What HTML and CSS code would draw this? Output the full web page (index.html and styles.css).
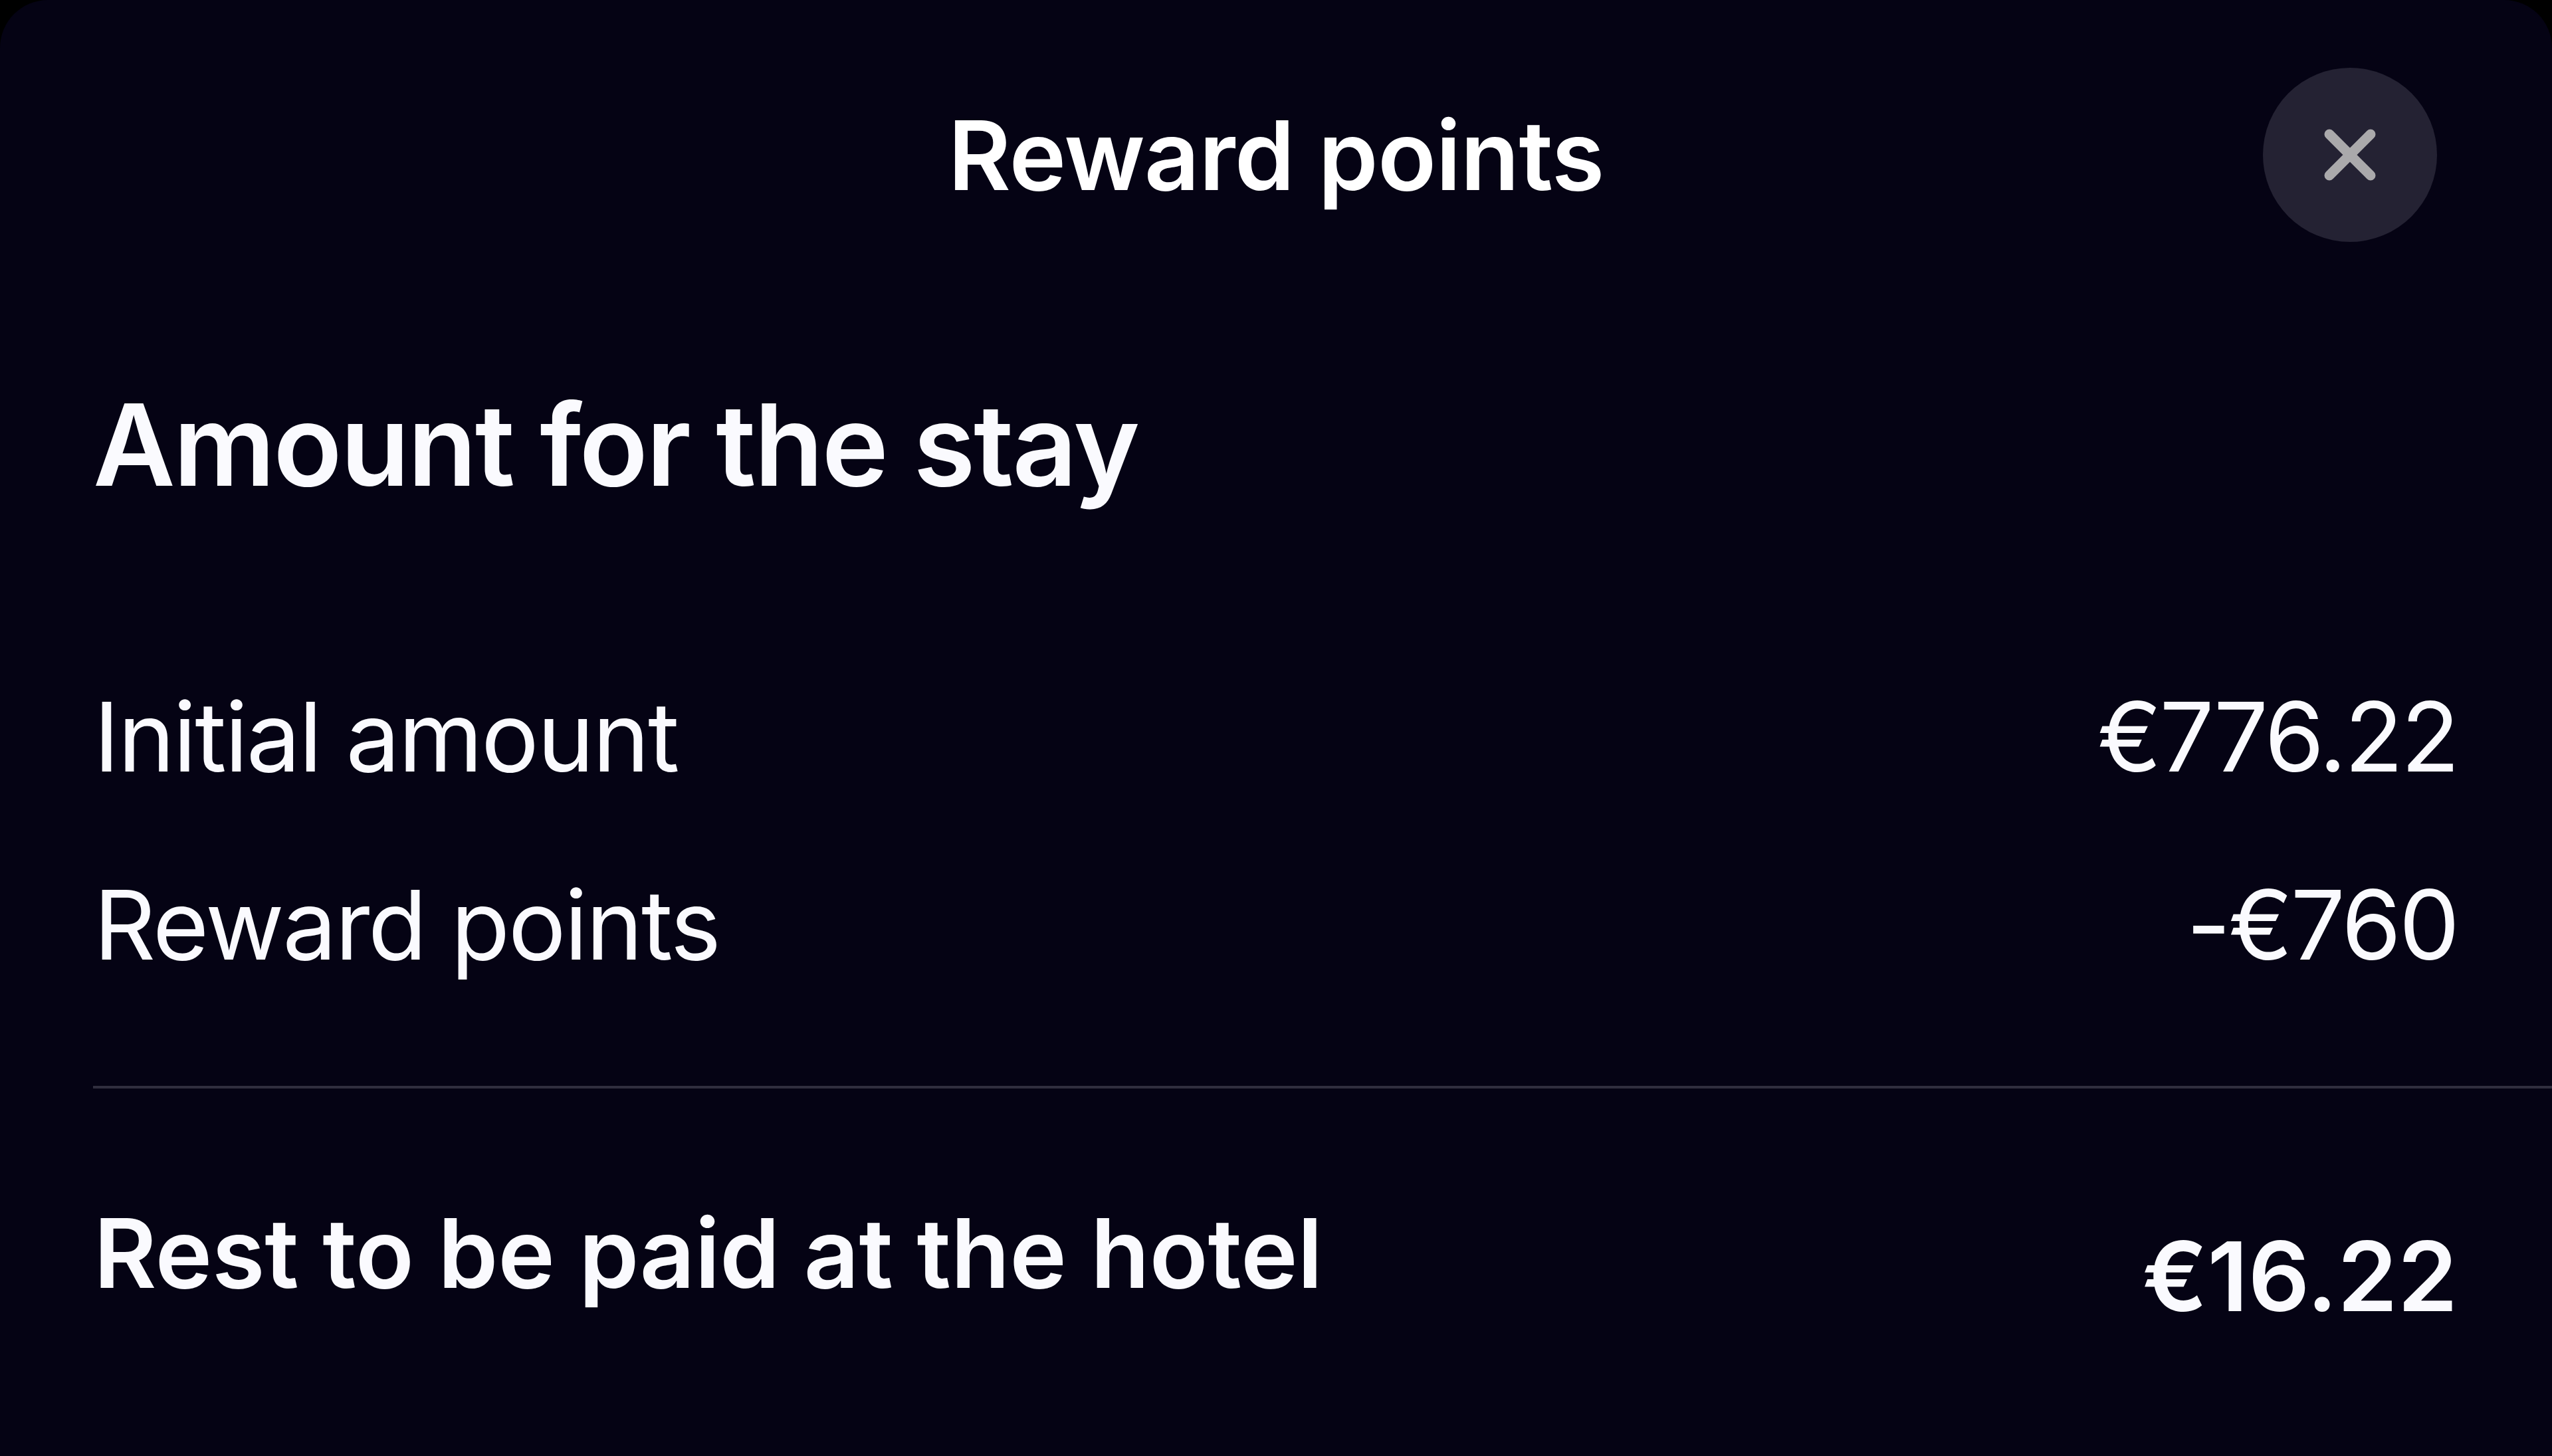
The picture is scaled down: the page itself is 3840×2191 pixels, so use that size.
FILE: index.html
```html
<!DOCTYPE html>
<html lang="en">
<head>
  <meta charset="UTF-8" />
  <title>Reward points</title>
  <link rel="stylesheet" href="styles.css">
</head>
<body>
  <div class="sheet">
    <header class="sheet-header">
      <h1>Reward points</h1>
      <button type="button" class="close-btn" aria-label="Close">
        <svg viewBox="0 0 80 80" width="80" height="80">
          <path d="M9 9 L71 71 M71 9 L9 71" />
        </svg>
      </button>
    </header>

    <main class="content">
      <h2>Amount for the stay</h2>

      <div class="row">
        <span>Initial amount</span>
        <span class="value">€776.22</span>
      </div>
      <div class="row">
        <span>Reward points</span>
        <span class="value">-€760</span>
      </div>

      <div class="row total">
        <span>Rest to be paid at the hotel</span>
        <span class="value">€16.22</span>
      </div>
    </main>
  </div>
</body>
</html>
```
FILE: styles.css
```css
* {
  box-sizing: border-box;
  margin: 0;
  padding: 0;
}

body {
  background: #000;
  color: #fafafe;
  font-family: Inter, sans-serif;
  overflow: hidden;
}

.sheet {
  height: 2191px;
  background: #050314;
  border-radius: 72px 72px 0 0;
}

.sheet-header {
  display: grid;
  grid-template-columns: 1fr auto 1fr;
  align-items: center;
  height: 466px;
  padding: 0 173px;
}

.sheet-header h1 {
  grid-column: 2;
  color: #fff;
  font-size: 145px;
  font-weight: 600;
  letter-spacing: -0.8px;
}

.close-btn {
  justify-self: end;
  display: flex;
  align-items: center;
  justify-content: center;
  width: 262px;
  height: 262px;
  border: none;
  border-radius: 50%;
  background: #242233;
}

.close-btn path {
  fill: none;
  stroke: #aaa9ab;
  stroke-width: 15;
  stroke-linecap: round;
}

.content {
  padding-left: 140px;
}

h2 {
  height: 501px;
  padding-top: 100px;
  font-size: 170px;
  font-weight: 600;
  letter-spacing: -2.7px;
}

.row {
  display: flex;
  justify-content: space-between;
  height: 283px;
  padding-left: 1px;
  padding-right: 142px;
  font-size: 145px;
  line-height: 283px;
  letter-spacing: -2.5px;
}

.row .value {
  letter-spacing: -3.3px;
}

.total {
  height: 500px;
  margin-top: 101px;
  border-top: 4px solid #302e3e;
  font-weight: 600;
  line-height: 496px;
  letter-spacing: -0.3px;
}

.total .value {
  padding-top: 35px;
  letter-spacing: 0;
}
```
